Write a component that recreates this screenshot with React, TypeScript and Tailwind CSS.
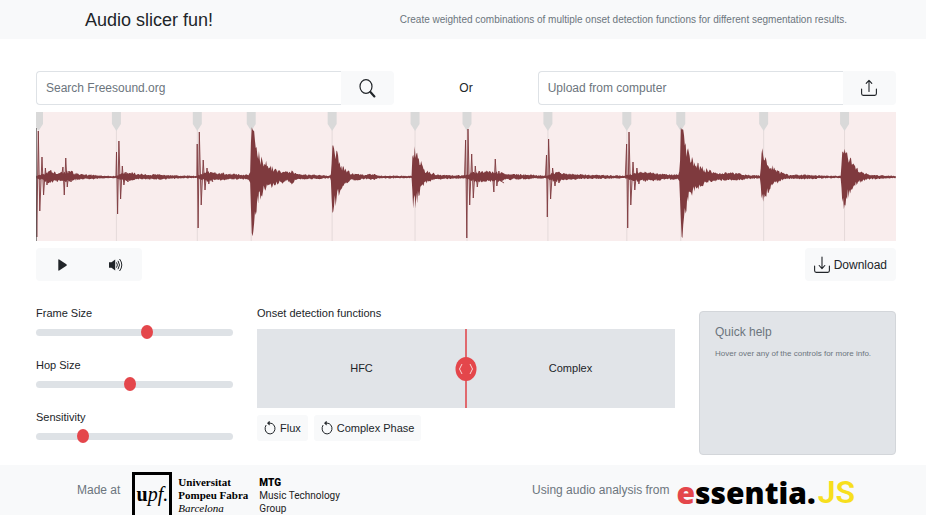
import { useState } from "react";
import type { ReactNode } from "react";

type Point = [number, number];
type Band = [number, number, number];

const WAVE_WIDTH = 861;
const WAVE_HEIGHT = 129;
const MID = 65;

const sliceMarkers = [2, 80, 161, 215, 296, 379, 431, 512, 591, 645, 728, 809];

// Oscillating hits: x position and signed amplitude of every swing.
const swings: Point[][] = [
  [[0, 0], [0.8, -60], [2.3, 46], [3.8, -34], [6, 20], [7.6, -18], [9.4, 9], [11, -8], [12.5, 5], [14, -5], [16, 4]],
  [[26, 4], [27, 10], [28.3, -18], [29.8, 19], [31.3, -10], [33, 6], [35, -5], [37, 3]],
  [[80, 0], [80.6, 25], [81.7, -37], [83, 36], [84.7, -22], [86.4, 11], [88, -8], [90, 5], [92, -5], [94, 4]],
  [[161, 0], [161.4, 33], [162.3, -51], [163.5, 45], [165.4, -28], [167.4, 17], [169.2, -13], [171.2, 9], [173, -7], [175, 5], [177, -5]],
  [[429, 0], [430.1, 37], [431.3, -61], [432.5, 48], [434.2, -28], [436.2, 23], [437.8, -21], [439.8, 11], [441.8, -10], [444, 6], [446, -5]],
  [[457, 2], [458.4, -15], [459.8, 18], [461.4, -9], [463.4, 6], [465.4, -4], [468.6, -6]],
  [[510, 0], [511.1, 22], [511.9, -40], [513.2, 38], [515.2, -22], [517.2, 9], [519.6, -9], [521.6, 5], [523.6, -6], [525, 4]],
  [[590, 0], [591.3, 33], [592.4, -51], [593.7, 45], [595.5, -28], [597.7, 15], [599.5, -13], [601.6, 9], [603.6, -7], [605.6, 5]],
];

// Solid part of the signal: x position, height above and height below the axis.
const bands: Band[] = [
  [0, 1, 1], [10, 4, 4], [13, 6, 5], [22, 4, 4], [34, 5, 4], [42, 3, 2.5], [56, 2, 2], [72, 1, 1], [80, 1, 1],
  [88, 4, 4], [96, 3.5, 3], [106, 2.5, 2], [125, 2, 2], [145, 1.2, 1.2], [160, 1, 1],
  [172, 4.5, 4], [184, 3.5, 3], [200, 2.5, 2], [213, 2, 2],
  [214.4, 6, 8], [215.6, 50, 44], [216.2, 51, 64], [217, 51, 64], [218.4, 50, 47], [219.4, 34, 32], [221, 27, 26], [224, 19, 19], [228, 14, 12],
  [235, 9, 9], [242, 6, 6], [252, 4, 3.5], [256, 5, 6], [261, 2.5, 2], [285, 1.8, 1.8], [295, 1, 1],
  [296, 16, 20], [296.8, 33, 36], [298, 31, 34], [299.5, 26, 24], [303, 19, 15], [306, 10, 9], [310, 6, 6], [317, 3, 3], [330, 1.8, 1.8], [338, 3, 3],
  [343, 1.2, 1.2], [376, 1, 1], [376.8, 27, 18], [378.4, 26, 29], [382, 18, 20], [386, 12, 10], [389, 6, 6], [396, 3.5, 3], [406, 1.8, 1.8],
  [428, 1.5, 1.5], [440, 4.5, 4], [446, 5, 4.5], [456, 4.5, 4], [464, 4, 4], [470, 3, 2.5], [495, 2, 1.8], [511, 1, 1],
  [519, 4.5, 4.5], [530, 3, 2.5], [550, 2, 1.8], [590, 1.2, 1.2], [602, 4.5, 4], [612, 4, 3.5], [630, 2.5, 2.5], [643, 2, 2],
  [644.4, 6, 8], [645.6, 50, 44], [646.2, 51, 64], [647, 51, 64], [648.4, 50, 47], [649.4, 34, 32], [651, 27, 26], [654, 19, 19], [658, 14, 12],
  [665, 9, 9], [673, 6, 5], [682, 3.5, 3], [702, 3.5, 3], [712, 1.8, 1.8], [725, 1.5, 1.5],
  [726, 18, 16], [727, 22, 25], [730, 19, 19], [734, 13, 12], [739, 8, 7], [746, 4, 3], [754, 1.8, 1.8], [770, 2, 2], [790, 1.2, 1.2],
  [806, 1, 1], [807, 25, 20], [808.5, 24, 29], [813, 18, 17], [818, 11, 8], [825, 5, 4.5], [834, 2, 2], [861, 1, 1],
];

function bandAt(x: number): [number, number] {
  let i = 0;
  while (i < bands.length - 2 && bands[i + 1][0] < x) i += 1;
  const [x0, up0, down0] = bands[i];
  const [x1, up1, down1] = bands[i + 1];
  const t = Math.min(1, Math.max(0, (x - x0) / (x1 - x0)));
  return [up0 + (up1 - up0) * t, down0 + (down1 - down0) * t];
}

function solidPath() {
  const top: string[] = [];
  const bottom: string[] = [];
  let seed = 17;
  // Small amplitudes vary a lot, tall ones stay close to the envelope.
  const jitter = (amplitude: number) => {
    seed = (seed * 16807) % 2147483647;
    const random = seed / 2147483647;
    return amplitude > 30 ? 0.9 + random * 0.1 : 0.65 + random * 0.7;
  };
  for (let x = 0; x <= WAVE_WIDTH; x += 0.8) {
    const [up, down] = bandAt(x);
    top.push(`${x.toFixed(1)},${(MID - up * jitter(up)).toFixed(1)}`);
    bottom.unshift(`${x.toFixed(1)},${(MID + down * jitter(down)).toFixed(1)}`);
  }
  return `M${top.join("L")}L${bottom.join("L")}Z`;
}

const solid = solidPath();

function Waveform() {
  return (
    <svg
      className="mt-[7px] block h-[129px] w-full bg-[#f9eded]"
      viewBox={`0 0 ${WAVE_WIDTH} ${WAVE_HEIGHT}`}
      preserveAspectRatio="none"
      role="img"
      aria-label="Waveform"
    >
      {sliceMarkers.slice(1).map((x) => (
        <path key={x} d={`M${x + 0.5} 18V129`} stroke="#e5dada" strokeWidth="1" />
      ))}
      {sliceMarkers.map((x) => (
        <path key={x} d={`M${x - 4} 0h9v12l-4.5 7l-4.5-7z`} fill="#d9d9d9" />
      ))}
      <path d={solid} fill="#7f3a3e" />
      {swings.map((swing) => (
        <polyline
          key={swing[0][0]}
          points={swing.map(([x, a]) => `${x},${MID - a}`).join(" ")}
          fill="#7f3a3e"
          fillOpacity="0.3"
          stroke="#7f3a3e"
          strokeWidth="1"
          strokeOpacity="0.9"
          strokeLinejoin="bevel"
        />
      ))}
      <path d="M0.5 16V129" stroke="#555" strokeOpacity="0.7" />
    </svg>
  );
}

function SearchIcon() {
  return (
    <svg width="17" height="19" viewBox="0 0 17 19" fill="none" stroke="#212529" aria-hidden="true">
      <ellipse cx="7" cy="7.5" rx="6" ry="6.8" strokeWidth="1.2" />
      <path d="M11.4 13l4 4.4" strokeWidth="2.2" strokeLinecap="round" />
    </svg>
  );
}

function TrayIcon({ down = false }: { down?: boolean }) {
  return (
    <svg width="16" height="18" viewBox="0 0 16 18" fill="none" stroke="#212529" strokeWidth="1.1" strokeLinecap="round" strokeLinejoin="round" aria-hidden="true">
      <path d="M.6 10v4.6q0 1.8 1.6 1.8h11.6q1.6 0 1.6-1.8V10" />
      {down ? <path d="M8 1v11.5M5.2 9.5L8 12.7l2.8-3.2" /> : <path d="M8 12.5V1.6M5.2 4.4L8 1.3l2.8 3.1" />}
    </svg>
  );
}

function PlayIcon() {
  return (
    <svg width="9" height="12" viewBox="0 0 9 12" fill="#212529" aria-hidden="true">
      <path d="M.3 1Q.3 0 1.2.5l7.2 4.7q.8.8 0 1.6l-7.2 4.7q-.9.5-.9-.5z" />
    </svg>
  );
}

function VolumeIcon() {
  return (
    <svg width="14" height="14" viewBox="0 0 14 14" fill="none" stroke="#212529" strokeWidth="1" aria-hidden="true">
      <path d="M0 4.2h2.5L6.2 1.4v11.2L2.5 9.8H0z" fill="#212529" stroke="none" />
      <path d="M7.5 4.4q1.8 2.6 0 5.2M9 2.8q3 4.2 0 8.4M10.6 1q4.4 6 0 12" />
    </svg>
  );
}

function RestoreIcon() {
  return (
    <svg width="12" height="14" viewBox="0 0 12 14" fill="none" stroke="#212529" strokeWidth="1" strokeLinecap="round" aria-hidden="true">
      <path d="M1.9 4.4A5 5.4 0 1 0 6 2.1H4.6" />
      <path d="M5.2.4L3.4 2.1l1.8 1.8z" fill="#212529" strokeWidth="0.6" />
    </svg>
  );
}

function FileField({ label, action, children }: { label: string; action: string; children: ReactNode }) {
  return (
    <div className="col-span-5 flex h-[34px]">
      <input
        type="text"
        aria-label={label}
        placeholder={label}
        className="min-w-0 flex-1 rounded-l-[4px] border border-r-0 border-[#dee2e6] bg-white px-[9px] text-[12px] text-[#495057] outline-none placeholder:text-[#6c757d] placeholder:opacity-100"
      />
      <button type="button" aria-label={action} className="flex w-[53px] items-center justify-center rounded-r-[4px] bg-[#f8f9fa]">
        {children}
      </button>
    </div>
  );
}

function Slider({ id, label, initial }: { id: string; label: string; initial: number }) {
  const [value, setValue] = useState(initial);
  return (
    <div className="flex flex-col">
      <label htmlFor={id} className="text-[11px] leading-4">{label}</label>
      <input
        id={id}
        type="range"
        min={0}
        max={1000}
        value={value}
        onChange={(e) => setValue(Number(e.target.value))}
        className="mt-[3px] h-4 w-full appearance-none bg-transparent [&::-webkit-slider-runnable-track]:h-[7px] [&::-webkit-slider-runnable-track]:rounded-full [&::-webkit-slider-runnable-track]:bg-[#dee2e6] [&::-webkit-slider-thumb]:-mt-1 [&::-webkit-slider-thumb]:h-[14px] [&::-webkit-slider-thumb]:w-[12px] [&::-webkit-slider-thumb]:appearance-none [&::-webkit-slider-thumb]:rounded-[50%] [&::-webkit-slider-thumb]:bg-[#e4464b]"
      />
    </div>
  );
}

function RestoreButton({ children }: { children: ReactNode }) {
  return (
    <button type="button" className="flex h-[26px] items-center gap-1 rounded-[3px] bg-[#f8f9fa] px-[7px] text-[11px]">
      <RestoreIcon />
      {children}
    </button>
  );
}

export default function App() {
  return (
    <div className="flex h-screen flex-col overflow-hidden bg-white font-['Liberation_Sans',Arial,sans-serif] text-[#212529]">
      <header className="flex h-[39px] shrink-0 items-center justify-between bg-[#f8f9fa] pr-[79px] pl-[85px]">
        <h1 className="text-[18px] leading-6">Audio slicer fun!</h1>
        <p className="text-[10px] leading-4 text-[#6c757d]">
          Create weighted combinations of multiple onset detection functions for different segmentation results.
        </p>
      </header>

      <main className="shrink-0 pt-8 pr-[30px] pb-[10px] pl-9">
        <div className="grid grid-cols-12 items-center">
          <FileField label="Search Freesound.org" action="Search"><SearchIcon /></FileField>
          <span className="col-span-2 text-center text-[12px]">Or</span>
          <FileField label="Upload from computer" action="Upload"><TrayIcon /></FileField>
        </div>

        <Waveform />

        <div className="mt-[7px] flex h-[33px] justify-between">
          <div className="flex rounded-[4px] bg-[#f8f9fa]">
            <button type="button" aria-label="Play" className="flex w-[53px] items-center justify-center"><PlayIcon /></button>
            <button type="button" aria-label="Volume" className="flex w-[53px] items-center justify-center"><VolumeIcon /></button>
          </div>
          <button type="button" className="flex items-center gap-1 rounded-[4px] bg-[#f8f9fa] px-[9px] text-[12px]">
            <TrayIcon down />
            Download
          </button>
        </div>

        <div className="mt-6 grid grid-cols-4 gap-6">
          <div className="flex flex-col gap-[17px]">
            <Slider id="frame" label="Frame Size" initial={570} />
            <Slider id="hop" label="Hop Size" initial={473} />
            <Slider id="sensitivity" label="Sensitivity" initial={220} />
          </div>

          <section className="col-span-2">
            <h2 className="text-[11px] leading-4">Onset detection functions</h2>
            <div className="relative mt-2 grid h-[79px] grid-cols-2 items-center bg-[#e1e4e8] text-center text-[11px]">
              <span>HFC</span>
              <span>Complex</span>
              <div className="absolute inset-y-0 left-1/2 w-[2px] -translate-x-1/2 bg-[#e0696e]" />
              <button type="button" aria-label="Balance" className="absolute top-1/2 left-1/2 flex h-6 w-[21px] -translate-x-1/2 -translate-y-1/2 items-center justify-center rounded-[50%] bg-[#e4464b]">
                <svg width="15" height="12" viewBox="0 0 15 12" fill="none" stroke="#f9d6d7" strokeWidth="1" aria-hidden="true">
                  <path d="M3.5 1L1 6l2.5 5M11.5 1L14 6l-2.5 5" />
                </svg>
              </button>
            </div>
            <div className="mt-[7px] flex gap-[6px]">
              <RestoreButton>Flux</RestoreButton>
              <RestoreButton>Complex Phase</RestoreButton>
            </div>
          </section>

          <aside className="mt-[6px] h-36 rounded-[4px] border border-[#d3d6da] bg-[#e1e4e8] px-[15px] pt-[10px] text-[#6c757d]">
            <h2 className="text-[12px] leading-5">Quick help</h2>
            <p className="mt-1 text-[8px] leading-4">Hover over any of the controls for more info.</p>
          </aside>
        </div>
      </main>

      <footer className="flex flex-1 items-start justify-between bg-[#f8f9fa] pr-[71px] pl-[77px] text-[#6c757d]">
        <div className="flex items-start">
          <span className="mt-4 text-[12px] leading-[18px]">Made at</span>
          <a href="#upf" className="mt-[7px] ml-3 flex text-black">
            <span className="flex h-12 w-10 justify-center border-[3px] border-black pt-[7px] font-['Liberation_Serif',serif] text-[20px] leading-6">
              <b>u</b><i>pf.</i>
            </span>
            <span className="ml-[6px] pt-1 font-['Liberation_Serif',serif] text-[11px] leading-[13px] font-bold">
              Universitat<br />Pompeu Fabra<br /><i className="font-normal">Barcelona</i>
            </span>
          </a>
          <a href="#mtg" className="mt-[11px] ml-[11px] font-['Roboto',sans-serif] text-[10px] leading-[13px] text-[#222]">
            <b className="font-black text-black">MTG</b><br />Music Technology<br />Group
          </a>
        </div>
        <div className="flex items-start">
          <span className="mt-4 text-[12px] leading-[18px]">Using audio analysis from</span>
          <a href="#essentia" className="mt-[10px] ml-[7px] flex font-['Open_Sans',sans-serif] text-[30px] leading-9 font-extrabold text-black">
            <span className="text-[#e4464b]">e</span>ssentia.
            <span className="ml-[2px] font-['Roboto',sans-serif] text-[32px] leading-[34px] font-semibold text-[#f7df1e]">JS</span>
          </a>
        </div>
      </footer>
    </div>
  );
}
